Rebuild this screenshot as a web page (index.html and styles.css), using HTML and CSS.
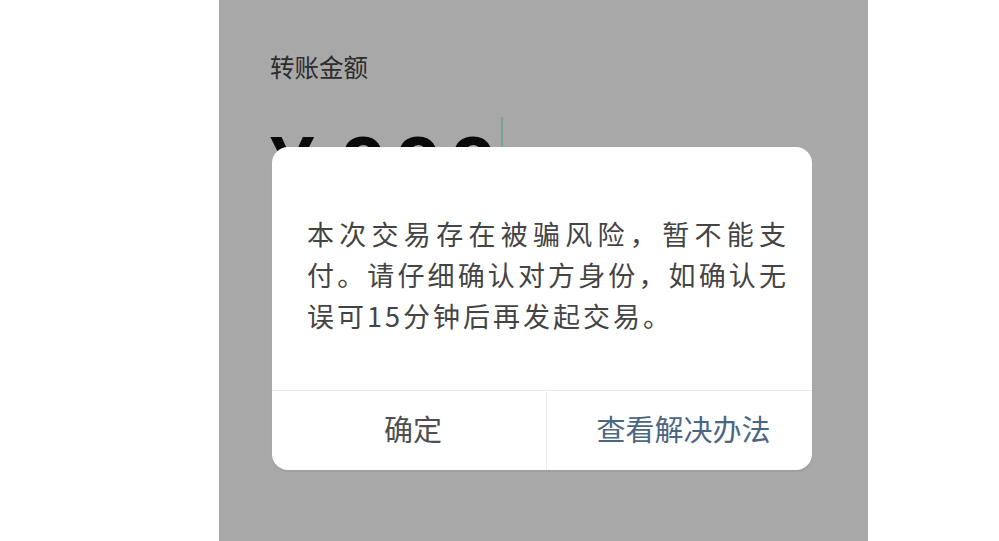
FILE: index.html
```html
<!DOCTYPE html>
<html lang="zh-CN">
<head>
<meta charset="utf-8">
<title>转账</title>
<link rel="stylesheet" href="styles.css">
</head>
<body>
<div class="page">
  <div class="screen">
    <div class="label">转账金额</div>
    <div class="amount">
      <span class="yen">¥</span>
      <span class="digits">999</span>
      <span class="cursor"></span>
    </div>
    <div class="dialog">
      <div class="message">本次交易存在被骗风险，暂不能支付。请仔细确认对方身份，如确认无误可15分钟后再发起交易。</div>
      <div class="actions">
        <div class="btn btn-ok">确定</div>
        <div class="btn btn-help">查看解决办法</div>
      </div>
    </div>
  </div>
</div>
</body>
</html>
```
FILE: styles.css
```css
html, body {
  margin: 0;
  padding: 0;
  background: #ffffff;
}
.page {
  width: 999px;
  height: 541px;
  overflow: hidden;
  display: flex;
  padding-left: 219px;
  box-sizing: border-box;
}
.screen {
  position: relative;
  width: 649px;
  height: 541px;
  background: #a8a8a8;
  box-sizing: border-box;
  padding: 53px 0 0 51px;
  display: flex;
  flex-direction: column;
  font-family: "Noto Sans CJK SC", "Noto Sans", sans-serif;
}
.label {
  font-size: 24.5px;
  line-height: 27px;
  color: #2c2c2c;
}
.amount {
  margin-top: 37px;
  display: flex;
  align-items: flex-start;
  font-family: "Liberation Sans", Arial, sans-serif;
  font-weight: bold;
  color: #0a0a0a;
}
.yen {
  font-size: 80px;
  line-height: 80px;
  margin-top: 8px;
}
.digits {
  font-size: 80px;
  line-height: 80px;
  margin-top: 8px;
  margin-left: 27px;
  letter-spacing: 10.5px;
}
.cursor {
  width: 2px;
  height: 90px;
  margin-left: -5px;
  background: #76a497;
}
.dialog {
  position: absolute;
  left: 53px;
  top: 147px;
  width: 540px;
  background: #ffffff;
  border-radius: 16px;
  overflow: hidden;
  box-shadow: 0 2px 2px rgba(0, 0, 0, 0.06);
}
.message {
  padding: 66px 23px 54px 35px;
  font-size: 27px;
  line-height: 41px;
  letter-spacing: 3px;
  text-align: justify;
  color: #444444;
}
.actions {
  display: grid;
  grid-template-columns: 275px 1fr;
  border-top: 1px solid #e8e8e8;
  height: 79px;
}
.btn {
  display: flex;
  align-items: center;
  justify-content: center;
  font-size: 29px;
  padding-left: 8px;
  padding-bottom: 6px;
}
.btn-ok {
  color: #4f4f4f;
  border-right: 1px solid #ececec;
}
.btn-help {
  color: #4a6682;
}
```
